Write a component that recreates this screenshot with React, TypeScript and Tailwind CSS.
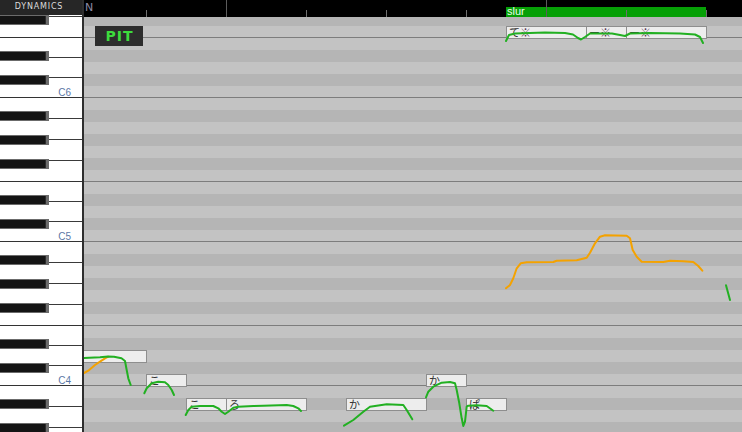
import React from 'react';

// Piano roll: rows run from F#6 (top) down to G#3, 12px per semitone.
const NAMES = ['C', 'C#', 'D', 'D#', 'E', 'F', 'F#', 'G', 'G#', 'A', 'A#', 'B'];
// where the white-key seam crosses each black-key row (px from row top)
const SEAM: Record<string, number> = { 'C#': 3, 'D#': 7, 'F#': 2, 'G#': 5, 'A#': 8 };

type Row = { midi: number; name: string; octave: number; black: boolean; line: boolean };

const rows: Row[] = [];
for (let midi = 90; midi >= 56; midi--) {
  const name = NAMES[midi % 12];
  rows.push({
    midi,
    name,
    octave: Math.floor(midi / 12) - 1,
    black: name.includes('#'),
    line: name === 'C' || name === 'F',
  });
}

// notes in page coordinates
const notes = [
  { x: 506, y: 26, w: 80, lyric: 'て', mark: true },
  { x: 586, y: 26, w: 40, lyric: 'ー', mark: true },
  { x: 626, y: 26, w: 80, lyric: 'ー', mark: true },
  { x: 70, y: 350, w: 76, lyric: '', mark: false },
  { x: 146, y: 374, w: 40, lyric: 'こ', mark: false },
  { x: 186, y: 398, w: 40, lyric: 'こ', mark: false },
  { x: 226, y: 398, w: 80, lyric: 'ろ', mark: false },
  { x: 346, y: 398, w: 80, lyric: 'か', mark: false },
  { x: 426, y: 374, w: 40, lyric: 'か', mark: false },
  { x: 466, y: 398, w: 40, lyric: 'ぱ', mark: false },
];

const GREEN = [
  '506,41 509,35 515,33.5 545,32.5 565,33 573,34.5 578,38 581,39.5 585,37 590,33.5 612,33.5 620,35 625,36 630,33.5 650,33 680,33.5 695,34.5 700,37 703,43',
  '84,358 100,357.3 108,356.5 114,356.7 121.5,358.3 125,361 126.7,370 128.3,378.3 130.7,385',
  '144.3,393.3 146.7,388.3 151.7,383.3 158.3,381.7 165,382.3 168.3,385 171.7,390 174,395',
  '185.7,415 188.3,410 191.7,406.7 200,406 213.3,406 218.3,408.3 221.7,411.7 225,414 228.3,411.7 233.3,407.7 238.3,406.7 253.3,406 263.3,405.7 286.7,405 293.3,406 298.3,408.3 301,411',
  '344,425.7 353.3,420 363.3,411.7 370,406.7 386.7,404.3 403.3,405 406.7,410 412.3,419.3',
  '426,397.3 428.3,391.7 433.3,386.7 441.7,382.7 450,382 455,383.3 456.7,390 459.3,403.3 461.7,418.3 463.3,426 465,421.7 466.7,406.7 468.3,405.7 476.7,405.3 486.7,406 493.3,410.7',
  '726,285.3 730,300',
];

const ORANGE = [
  '84,373 88.3,370.7 95,365 100,361.7 105,358.3 108.3,356.7',
  '506,288.3 510,285 513.3,278.3 516.7,268.3 520.7,263.3 526.7,262.3 553.3,262 556.7,260.7 576.7,260.3 581.7,259 586.7,257.7 590,252.7 595,243.3 600,236.7 605,235.3 626.7,235.7 630,238.3 632.7,250 636.7,256.7 641.7,261.7 663.3,262 670,260.7 683.3,261.3 693.3,262 698.3,266 702.3,270.7',
];

const TALL_TICKS = [226, 546];
const SMALL_TICKS = [146, 306, 386, 466, 626, 706];

function PianoKeys() {
  return (
    <div className="flex flex-col mt-[-1px]">
      {rows.map((r) => (
        <div
          key={r.midi}
          className={`relative h-[12px] shrink-0 box-border ${r.line ? 'border-b border-[#333]' : ''}`}
        >
          {r.black && (
            <>
              <div className="absolute left-0 right-0 h-px bg-[#3a3a3a]" style={{ top: SEAM[r.name] }} />
              <div className="relative mt-[1px] h-[10px] w-[49px] bg-[#6b6b6b] pt-px pr-[3px] pb-px box-border">
                <div className="h-full w-full bg-[#141414] border-r border-[#2c2c2c]" />
              </div>
            </>
          )}
          {r.name === 'C' && (
            <span className="absolute right-[11px] bottom-[-1px] text-[10px] leading-[10px] text-[#5b78a6] font-['Liberation_Sans',sans-serif]">
              C{r.octave}
            </span>
          )}
        </div>
      ))}
    </div>
  );
}

function GridRows() {
  return (
    <div className="flex flex-col mt-[-3px]">
      {rows.map((r) => (
        <div
          key={r.midi}
          className={`h-[12px] shrink-0 box-border ${r.black ? 'bg-[#b5b5b5]' : 'bg-[#c3c3c3]'} ${
            r.line ? 'border-b border-[#7d7d7d]' : ''
          }`}
        />
      ))}
    </div>
  );
}

export default function App() {
  return (
    <div className="w-[742px] h-[432px] overflow-hidden flex bg-white font-['Liberation_Sans',sans-serif]">
      {/* keyboard column */}
      <div className="w-[84px] shrink-0 flex flex-col border-r-2 border-[#2e2e2e] box-border overflow-hidden bg-white">
        <div className="h-[15px] shrink-0 bg-[#262626] flex items-center justify-center">
          <span className="text-[8px] leading-[8px] tracking-[0.8px] text-[#dcdcdc] font-['DejaVu_Sans',sans-serif] mt-[-2px] mr-[4px]">
            DYNAMICS
          </span>
        </div>
        <div className="flex-1 overflow-hidden">
          <PianoKeys />
        </div>
      </div>

      {/* roll */}
      <div className="flex-1 flex flex-col min-w-0">
        <div className="relative h-[17px] shrink-0 bg-black">
          <span className="absolute left-[1px] top-[2px] text-[11px] leading-[11px] text-[#8a8aa6] font-['DejaVu_Sans',sans-serif]">
            N
          </span>
          <div className="absolute left-[422px] top-[7px] h-[10px] w-[200px] bg-[#06a006]">
            <span className="block pl-[1px] text-[11px] leading-[9px] text-[#eaffea]">slur</span>
          </div>
          {TALL_TICKS.map((x) => (
            <div key={x} className="absolute top-0 h-[17px] w-px bg-[#5c5c5c]" style={{ left: x - 84 }} />
          ))}
          {SMALL_TICKS.map((x) => (
            <div key={x} className="absolute top-[10px] h-[7px] w-px bg-[#6e6e6e]" style={{ left: x - 84 }} />
          ))}
        </div>

        <div className="relative flex-1 overflow-hidden">
          <GridRows />

          {notes.map((n, i) => (
            <div
              key={i}
              className="absolute h-[13px] box-border border border-[#8e8e8e] bg-[#ededed]"
              style={{ left: n.x - 84, top: n.y - 17, width: n.w + 1 }}
            >
              <span className="block pl-[2px] mt-[-1px] text-[11px] leading-[12px] text-[#333] whitespace-nowrap font-['Noto_Sans_CJK_JP',sans-serif]">
                {n.lyric}
                {n.mark && <span className="text-[#553350]">※</span>}
              </span>
            </div>
          ))}

          <svg
            className="absolute inset-0 pointer-events-none"
            width={658}
            height={415}
            viewBox="84 17 658 415"
          >
            {ORANGE.map((p, i) => (
              <polyline key={'o' + i} points={p} fill="none" stroke="#f4a200" strokeWidth={2} strokeLinejoin="round" strokeLinecap="round" />
            ))}
            {GREEN.map((p, i) => (
              <polyline key={'g' + i} points={p} fill="none" stroke="#22b022" strokeWidth={2} strokeLinejoin="round" strokeLinecap="round" />
            ))}
          </svg>

          <div className="absolute left-[11px] top-[9px] w-[48px] h-[20px] bg-[#2d2d2d] flex items-center justify-center">
            <span className="text-[14px] leading-[14px] font-bold tracking-[1px] text-[#3ddc3d] font-['DejaVu_Sans',sans-serif] ml-[1px]">
              PIT
            </span>
          </div>
        </div>
      </div>
    </div>
  );
}
